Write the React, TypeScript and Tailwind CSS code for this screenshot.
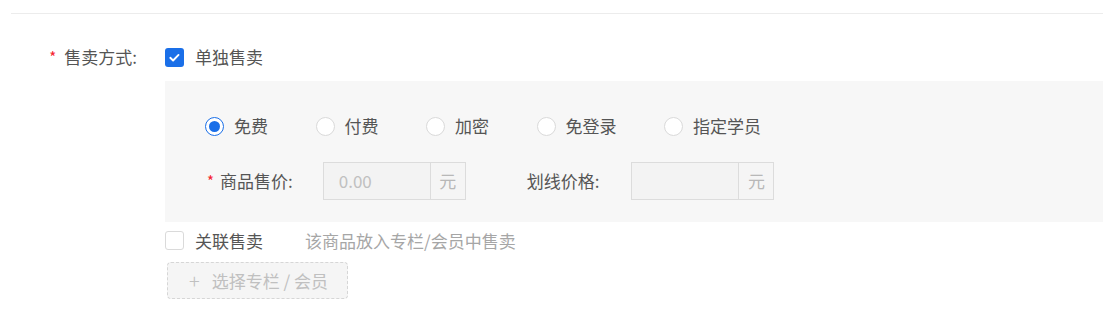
import React from 'react';

const font = { fontFamily: '"Noto Sans CJK SC", "Noto Sans", sans-serif' };

function Radio({ label, checked }: { label: string; checked?: boolean }) {
  return (
    <label className="flex items-center gap-[10px]">
      <span
        className={
          checked
            ? 'flex h-[19px] w-[19px] items-center justify-center rounded-full border border-[#1a6fe8] bg-white'
            : 'h-[19px] w-[19px] rounded-full border border-[#dadada] bg-white'
        }
      >
        {checked && <span className="h-[11px] w-[11px] rounded-full bg-[#1a6fe8]" />}
      </span>
      <span>{label}</span>
    </label>
  );
}

function PriceInput({ placeholder }: { placeholder?: string }) {
  return (
    <div className="flex h-[38px]">
      <div className="flex w-[108px] items-center border border-[#dcdcdc] bg-[#f3f3f3] pl-[15px] text-[#c0c0c0]">
        {placeholder}
      </div>
      <div className="flex w-[35px] items-center justify-center border border-l-0 border-[#dcdcdc] bg-[#f5f5f5] text-[#b8b8b8]">
        元
      </div>
    </div>
  );
}

export default function App() {
  return (
    <div className="h-[315px] w-[1103px] overflow-hidden bg-white text-[17px] text-[#555]" style={font}>
      <div className="pt-[13px]">
        <div className="ml-[11px] border-t border-[#ececec]" />
      </div>

      <div className="mt-[33px] flex">
        <div className="flex h-[20px] w-[165px] items-center justify-end pr-[28px]">
          <span className="mr-[8px] text-[15px] text-[#f5222d]">*</span>
          <span>售卖方式:</span>
        </div>

        <div className="flex-1">
          <label className="flex h-[20px] items-center gap-[11px]">
            <span className="flex h-[19px] w-[19px] items-center justify-center rounded-[3px] bg-[#1a6fe8]">
              <svg viewBox="0 0 16 16" className="h-[15px] w-[15px]" fill="none" stroke="white" strokeWidth="2" strokeLinecap="round" strokeLinejoin="round">
                <path d="M3.5 8.3l3 2.9 5.8-6" />
              </svg>
            </span>
            <span>单独售卖</span>
          </label>

          <div className="mt-[14px] bg-[#f7f7f7] pl-[40px] pt-[35px] pb-[22px]">
            <div className="flex h-[20px] items-center gap-[47.5px]">
              <Radio label="免费" checked />
              <Radio label="付费" />
              <Radio label="加密" />
              <Radio label="免登录" />
              <Radio label="指定学员" />
            </div>

            <div className="mt-[26px] flex items-center">
              <span className="mr-[6px] ml-[2px] text-[15px] text-[#f5222d]">*</span>
              <span>商品售价:</span>
              <div className="ml-[30px]">
                <PriceInput placeholder="0.00" />
              </div>
              <span className="ml-[61px]">划线价格:</span>
              <div className="ml-[32px]">
                <PriceInput />
              </div>
            </div>
          </div>

          <label className="mt-[9px] flex h-[19px] items-center gap-[11px]">
            <span className="h-[19px] w-[19px] rounded-[3px] border border-[#dadada] bg-white" />
            <span>关联售卖</span>
            <span className="ml-[31px] text-[#a6a6a6]">该商品放入专栏/会员中售卖</span>
          </label>

          <button className="mt-[12px] ml-[2px] flex h-[37px] w-[181px] items-center gap-[12px] rounded-[4px] border border-dashed border-[#d6d6d6] bg-[#f5f5f5] pl-[21px] text-[#c0c0c0]">
            <span className="text-[20px] leading-none font-light">+</span>
            <span>选择专栏 / 会员</span>
          </button>
        </div>
      </div>
    </div>
  );
}
